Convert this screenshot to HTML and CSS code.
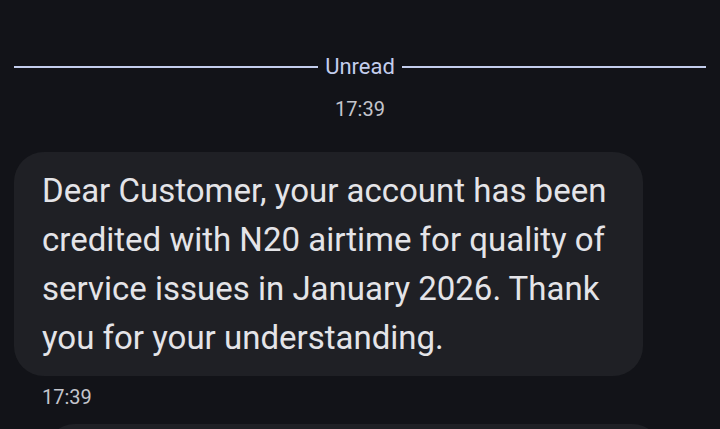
FILE: index.html
```html
<!DOCTYPE html>
<html>
<head>
<meta charset="utf-8">
<link rel="stylesheet" href="styles.css">
</head>
<body>
<div class="thread">
  <div class="divider">
    <span class="rule"></span>
    <span class="label">Unread</span>
    <span class="rule"></span>
  </div>
  <div class="stamp">17:39</div>
  <div class="bubble">Dear Customer, your account has been credited with N20 airtime for quality of service issues in January 2026. Thank you for your understanding.</div>
  <div class="meta">17:39</div>
  <div class="bubble next"></div>
</div>
</body>
</html>
```
FILE: styles.css
```css
html, body {
  margin: 0;
  padding: 0;
  background: #121318;
  height: 100%;
  overflow: hidden;
}
.thread {
  font-family: Roboto, "Noto Sans", sans-serif;
  display: flex;
  flex-direction: column;
  padding-top: 55px;
}
.divider {
  display: flex;
  align-items: center;
  gap: 7px;
  padding: 0 14px;
  height: 24px;
}
.rule {
  flex: 1;
  height: 2px;
  background: #c3cdec;
}
.label {
  color: #c3cdec;
  font-size: 22px;
  line-height: 24px;
}
.stamp {
  text-align: center;
  color: #c4c5cc;
  font-size: 20px;
  line-height: 24px;
  margin-top: 18px;
}
.bubble {
  margin: 31px 0 0 14px;
  width: 573px;
  padding: 14px 28px;
  background: #1f2025;
  border-radius: 30px;
  color: #e4e4e8;
  font-size: 33px;
  line-height: 49px;
}
.meta {
  color: #c4c5cc;
  font-size: 20px;
  line-height: 24px;
  margin: 9px 0 0 42px;
}
.bubble.next {
  margin: 15px 0 0 45px;
  width: 561px;
  height: 60px;
}
```
